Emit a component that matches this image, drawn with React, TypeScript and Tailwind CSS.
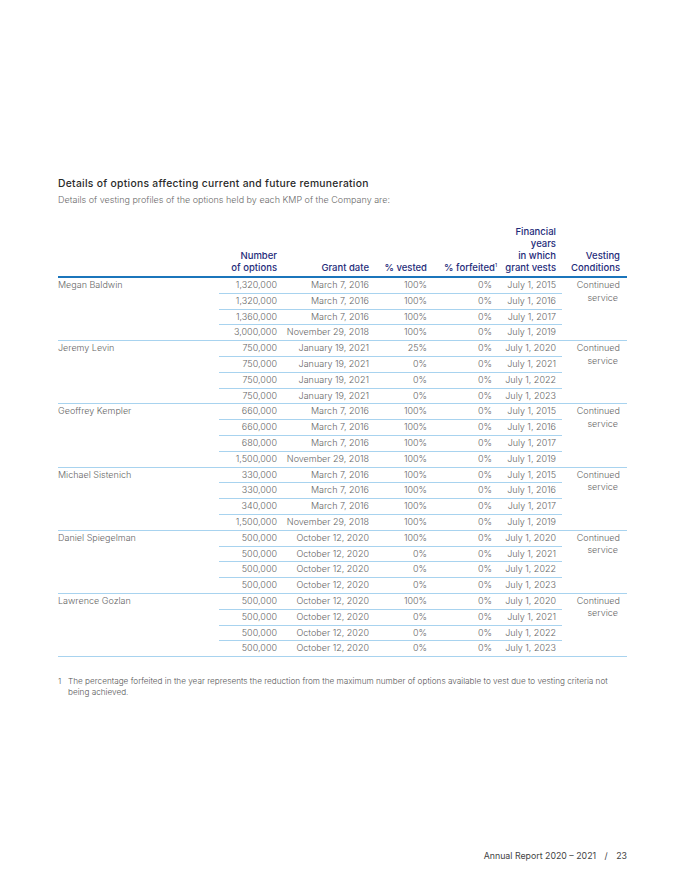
import React from "react";

type Row = [string, string, string, string, string];
type Group = { name: string; rows: Row[] };

const groups: Group[] = [
  {
    name: "Megan Baldwin",
    rows: [
      ["1,320,000", "March 7, 2016", "100%", "0%", "July 1, 2015"],
      ["1,320,000", "March 7, 2016", "100%", "0%", "July 1, 2016"],
      ["1,360,000", "March 7, 2016", "100%", "0%", "July 1, 2017"],
      ["3,000,000", "November 29, 2018", "100%", "0%", "July 1, 2019"],
    ],
  },
  {
    name: "Jeremy Levin",
    rows: [
      ["750,000", "January 19, 2021", "25%", "0%", "July 1, 2020"],
      ["750,000", "January 19, 2021", "0%", "0%", "July 1, 2021"],
      ["750,000", "January 19, 2021", "0%", "0%", "July 1, 2022"],
      ["750,000", "January 19, 2021", "0%", "0%", "July 1, 2023"],
    ],
  },
  {
    name: "Geoffrey Kempler",
    rows: [
      ["660,000", "March 7, 2016", "100%", "0%", "July 1, 2015"],
      ["660,000", "March 7, 2016", "100%", "0%", "July 1, 2016"],
      ["680,000", "March 7, 2016", "100%", "0%", "July 1, 2017"],
      ["1,500,000", "November 29, 2018", "100%", "0%", "July 1, 2019"],
    ],
  },
  {
    name: "Michael Sistenich",
    rows: [
      ["330,000", "March 7, 2016", "100%", "0%", "July 1, 2015"],
      ["330,000", "March 7, 2016", "100%", "0%", "July 1, 2016"],
      ["340,000", "March 7, 2016", "100%", "0%", "July 1, 2017"],
      ["1,500,000", "November 29, 2018", "100%", "0%", "July 1, 2019"],
    ],
  },
  {
    name: "Daniel Spiegelman",
    rows: [
      ["500,000", "October 12, 2020", "100%", "0%", "July 1, 2020"],
      ["500,000", "October 12, 2020", "0%", "0%", "July 1, 2021"],
      ["500,000", "October 12, 2020", "0%", "0%", "July 1, 2022"],
      ["500,000", "October 12, 2020", "0%", "0%", "July 1, 2023"],
    ],
  },
  {
    name: "Lawrence Gozlan",
    rows: [
      ["500,000", "October 12, 2020", "100%", "0%", "July 1, 2020"],
      ["500,000", "October 12, 2020", "0%", "0%", "July 1, 2021"],
      ["500,000", "October 12, 2020", "0%", "0%", "July 1, 2022"],
      ["500,000", "October 12, 2020", "0%", "0%", "July 1, 2023"],
    ],
  },
];

export default function App() {
  return (
    <div
      className="w-[675px] h-[891px] bg-white relative text-[#666]"
      style={{ fontFamily: "Inter, 'Liberation Sans', sans-serif" }}
    >
      <div className="pl-[58px] pr-[48px] pt-[176px]">
        <h2 className="text-[10.3px] leading-[14px] font-medium text-[#2a2a2a] tracking-[0.3px]">
          Details of options affecting current and future remuneration
        </h2>
        <p className="mt-[3px] text-[9px] leading-[13px] font-light text-[#6a6a6a]">
          Details of vesting profiles of the options held by each KMP of the Company are:
        </p>

        <table className="mt-[20px] w-[569px] border-separate border-spacing-0 text-[9px] font-light table-fixed whitespace-nowrap">
          <colgroup>
            <col className="w-[161px]" />
            <col className="w-[64px]" />
            <col className="w-[92px]" />
            <col className="w-[58px]" />
            <col className="w-[65px]" />
            <col className="w-[64px]" />
            <col className="w-[65px]" />
          </colgroup>
          <thead>
            <tr className="text-[#1f2c7a] font-medium text-[9.5px] leading-[12px] align-bottom">
              <th className="border-b-2 border-[#1b75bb] pb-[2px]"></th>
              <th className="border-b-2 border-[#1b75bb] pb-[2px] pr-[6px] text-right font-medium">
                Number
                <br />
                of options
              </th>
              <th className="border-b-2 border-[#1b75bb] pb-[2px] pr-[6px] text-right font-medium">
                Grant date
              </th>
              <th className="border-b-2 border-[#1b75bb] pb-[2px] pr-[6px] text-right font-medium">
                % vested
              </th>
              <th className="border-b-2 border-[#1b75bb] pb-[2px] pr-[1px] text-right font-medium">
                % forfeited
                <span className="relative top-[-4px] text-[5px] leading-none">1</span>
              </th>
              <th className="border-b-2 border-[#1b75bb] pb-[2px] pr-[6px] text-right font-medium">
                Financial
                <br />
                years
                <br />
                in which
                <br />
                grant vests
              </th>
              <th className="border-b-2 border-[#1b75bb] pb-[2px] pr-[7px] text-right font-medium">
                Vesting
                <br />
                Conditions
              </th>
            </tr>
          </thead>
          <tbody>
            {groups.map((g) =>
              g.rows.map((r, i) => {
                const cell =
                  "h-[15.8px] p-0 leading-[14.8px] text-right border-b border-[#a8d3ef] pr-[6px]";
                return (
                  <tr key={g.name + i}>
                    {i === 0 && (
                      <td
                        rowSpan={4}
                        className="p-0 align-top text-left leading-[14.8px] border-b border-[#a8d3ef]"
                      >
                        {g.name}
                      </td>
                    )}
                    <td className={cell}>{r[0]}</td>
                    <td className={cell}>{r[1]}</td>
                    <td className={cell}>{r[2]}</td>
                    <td className={cell}>{r[3]}</td>
                    <td className={cell}>{r[4]}</td>
                    {i === 0 && (
                      <td
                        rowSpan={4}
                        className="p-0 pr-[7px] align-top text-right leading-[12.5px] pt-[1px] border-b border-[#a8d3ef]"
                      >
                        Continued
                        <br />
                        <span className="pr-[2px]">service</span>
                      </td>
                    )}
                  </tr>
                );
              })
            )}
          </tbody>
        </table>

        <div className="mt-[19px] flex text-[8.2px] leading-[11px] font-light text-[#555]">
          <span className="w-[10px] shrink-0">1</span>
          <span className="w-[540px]">
            The percentage forfeited in the year represents the reduction from the maximum number of
            options available to vest due to vesting criteria not being achieved.
          </span>
        </div>
      </div>

      <div className="absolute right-[48px] top-[850px] text-[8.8px] leading-[12px] text-[#444]">
        Annual Report 2020 – 2021 <span className="mx-[6px]">/</span> 23
      </div>
    </div>
  );
}
